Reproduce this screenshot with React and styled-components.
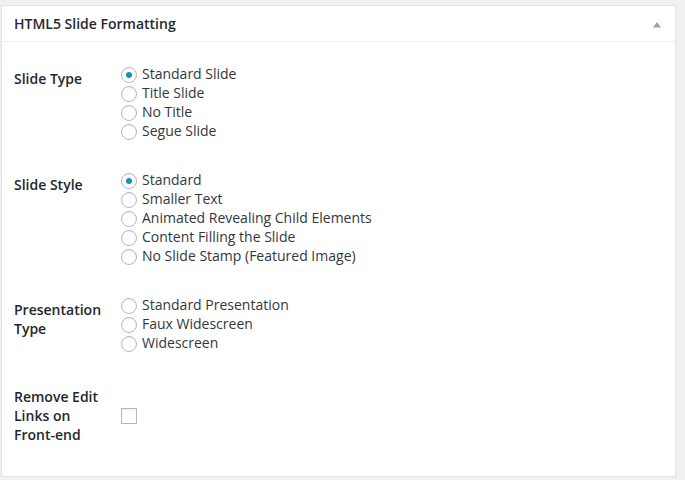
import React from "react";
import styled, { createGlobalStyle } from "styled-components";

const GlobalStyle = createGlobalStyle`
  body {
    margin: 0;
    background: #f1f1f1;
    font-family: "Open Sans", "Liberation Sans", sans-serif;
    color: #32373c;
  }
`;

const Page = styled.div`
  padding: 5px 0 0 1px;
`;

const Postbox = styled.div`
  width: 675px;
  box-sizing: border-box;
  background: #fff;
  border: 1px solid #e5e5e5;
  box-shadow: 0 1px 1px rgba(0, 0, 0, 0.04);
`;

const Header = styled.div`
  display: flex;
  align-items: center;
  justify-content: space-between;
  height: 35px;
  padding: 0 14px 0 12px;
  border-bottom: 1px solid #eee;
`;

const Title = styled.h2`
  margin: 0;
  font-size: 14px;
  font-weight: 600;
  line-height: 35px;
  color: #23282d;
`;

const Toggle = styled.svg`
  display: block;
  margin-top: 2px;
`;

const Body = styled.div`
  padding: 7px 12px 17px;
`;

const Row = styled.div`
  display: grid;
  grid-template-columns: 97px 1fr;
  column-gap: 10px;
  padding: 15px 0;
`;

const FieldLabel = styled.div`
  margin-top: 5px;
  font-size: 14px;
  font-weight: 600;
  line-height: 19px;
  color: #23282d;
`;

const Choices = styled.div`
  display: flex;
  flex-direction: column;
  padding-top: ${({ $offset }) => $offset || 0}px;
`;

const Choice = styled.label`
  display: flex;
  align-items: flex-start;
  gap: 5px;
  height: 19px;
  font-size: 14px;
  line-height: 19px;
  color: #32373c;
`;

const Box = styled.input`
  appearance: none;
  flex: none;
  box-sizing: border-box;
  width: 16px;
  height: 16px;
  margin: ${({ $top }) => $top}px 0 0;
  border: 1px solid #b4b9be;
  border-radius: ${({ type }) => (type === "radio" ? "50%" : "0")};
  background: #fff;
  box-shadow: inset 0 1px 2px rgba(0, 0, 0, 0.07);
  display: flex;
  align-items: center;
  justify-content: center;

  &:checked::before {
    content: "";
    width: 6px;
    height: 6px;
    border-radius: 50%;
    background: #1e8cbe;
  }
`;

const rows = [
  {
    label: "Slide Type",
    name: "slide_type",
    options: ["Standard Slide", "Title Slide", "No Title", "Segue Slide"],
    checked: 0,
  },
  {
    label: "Slide Style",
    name: "slide_style",
    options: [
      "Standard",
      "Smaller Text",
      "Animated Revealing Child Elements",
      "Content Filling the Slide",
      "No Slide Stamp (Featured Image)",
    ],
    checked: 0,
  },
  {
    label: "Presentation Type",
    name: "presentation_type",
    options: ["Standard Presentation", "Faux Widescreen", "Widescreen"],
    checked: -1,
  },
];

export default function App() {
  return (
    <Page>
      <GlobalStyle />
      <Postbox>
        <Header>
          <Title>HTML5 Slide Formatting</Title>
          <Toggle width="8" height="6" viewBox="0 0 8 6">
            <polygon points="4,0 8,5.5 0,5.5" fill="#9ea3a8" />
          </Toggle>
        </Header>
        <Body>
          {rows.map((row) => (
            <Row key={row.name}>
              <FieldLabel>{row.label}</FieldLabel>
              <Choices>
                {row.options.map((opt, i) => (
                  <Choice key={opt}>
                    <Box
                      type="radio"
                      name={row.name}
                      $top={3}
                      defaultChecked={i === row.checked}
                    />
                    {opt}
                  </Choice>
                ))}
              </Choices>
            </Row>
          ))}
          <Row>
            <FieldLabel>Remove Edit Links on Front-end</FieldLabel>
            <Choices $offset={26}>
              <Box type="checkbox" $top={0} />
            </Choices>
          </Row>
        </Body>
      </Postbox>
    </Page>
  );
}
